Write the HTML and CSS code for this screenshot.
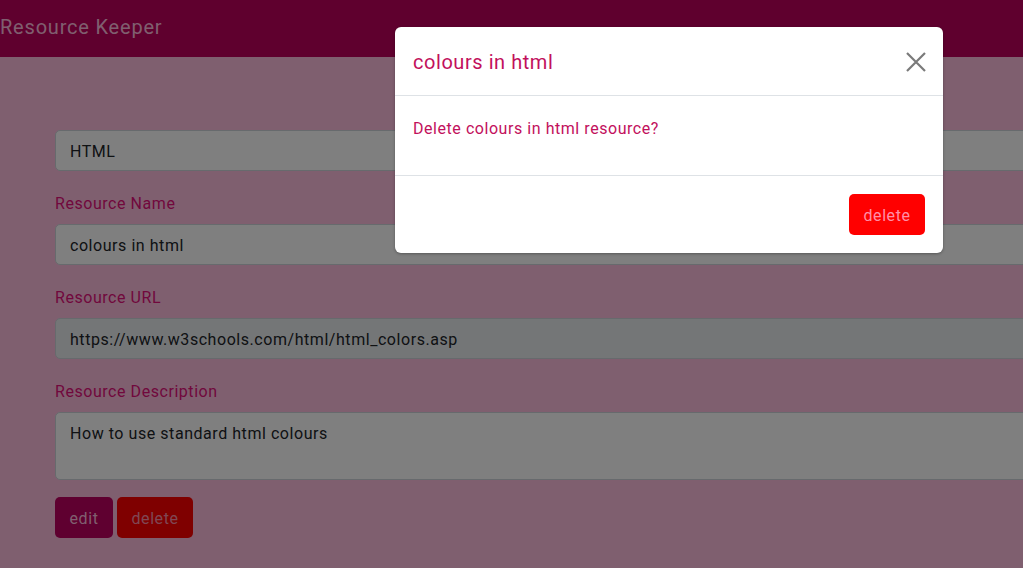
FILE: index.html
```html
<!DOCTYPE html>
<html>
<head>
<meta charset="utf-8">
<link rel="stylesheet" href="styles.css">
</head>
<body>
<header class="navbar"><span class="brand">Resource Keeper</span></header>
<main class="page">
  <form class="form">
    <div class="field first"><div class="input">HTML</div></div>
    <div class="field"><label class="label">Resource Name</label><div class="input">colours in html</div></div>
    <div class="field"><label class="label">Resource URL</label><div class="input readonly">https://www.w3schools.com/html/html_colors.asp</div></div>
    <div class="field"><label class="label">Resource Description</label><div class="input textarea">How to use standard html colours</div></div>
    <div class="actions"><button type="button" class="btn btn-edit">edit</button><button type="button" class="btn btn-delete">delete</button></div>
  </form>
</main>
<div class="backdrop"></div>
<div class="modal-wrap">
  <div class="modal">
    <div class="modal-header">
      <h5 class="modal-title">colours in html</h5>
      <svg class="close" width="22" height="22" viewBox="0 0 22 22"><path d="M2 2 L20 20 M20 2 L2 20" stroke="#7a7a7a" stroke-width="2.2" fill="none"/></svg>
    </div>
    <div class="modal-body">Delete colours in html resource?</div>
    <div class="modal-footer"><button type="button" class="btn btn-delete modal-delete">delete</button></div>
  </div>
</div>
</body>
</html>
```

FILE: styles.css
```css
* { box-sizing: border-box; }
html, body { margin: 0; padding: 0; }
body {
  width: 1023px; height: 568px; overflow: hidden;
  background: #ffbedf;
  font-family: Roboto, "Liberation Sans", sans-serif;
  font-size: 16px;
  letter-spacing: 0.55px;
  position: relative;
}
.navbar {
  height: 57px;
  background: #be005c;
  display: flex; align-items: center;
}
.brand { font-size: 20px; color: #ffbedf; line-height: 1; margin-top: -4px; letter-spacing: 0.8px; }
.page { padding: 73px 0 0 55px; }
.form { width: 1100px; }
.field { display: flex; flex-direction: column; margin-bottom: 22px; }
.label { color: #e3107a; font-size: 16px; line-height: 20px; margin-bottom: 10px; padding-top: 1px; }
.input {
  height: 41px; background: #fff; border: 1px solid #ced4da; border-radius: 5px;
  padding: 1px 14px 0; display: flex; align-items: center; color: #212529; font-size: 16px;
}
.readonly { background: #e9ecef; }
.textarea { height: 68px; align-items: flex-start; padding-top: 11px; }
.actions { display: flex; gap: 4px; margin-top: -5px; }
.btn {
  font-family: inherit; font-size: 16px; letter-spacing: 0.55px; border: 0; border-radius: 5px;
  height: 41px; padding: 2px 0 0; cursor: pointer;
}
.btn-edit { background: #be0060; color: #ffbedf; width: 58px; }
.btn-delete { background: #ff0000; color: #ff8fa8; width: 76px; }
.backdrop { position: absolute; inset: 0; background: rgba(0,0,0,0.5); }
.modal-wrap { position: absolute; left: 395px; top: 27px; }
.modal {
  width: 548px; background: #fff; border-radius: 6px; overflow: hidden;
  box-shadow: 0 1px 3px rgba(0,0,0,0.3);
}
.modal-header {
  height: 69px; display: flex; align-items: center; justify-content: space-between;
  padding: 0 16px 0 18px; border-bottom: 1px solid #dee2e6;
}
.modal-title { margin: 0; font-weight: 400; font-size: 20px; color: #c2105c; padding-top: 2px; }
.close { margin-top: 1px; }
.modal-body { height: 79px; padding: 23px 18px 0; color: #c2105c; font-size: 16px; }
.modal-footer {
  height: 78px; border-top: 1px solid #dee2e6; display: flex; justify-content: flex-end;
  align-items: center; padding: 0 18px;
}
.modal-delete { height: 41px; margin-top: -1px; }
```
